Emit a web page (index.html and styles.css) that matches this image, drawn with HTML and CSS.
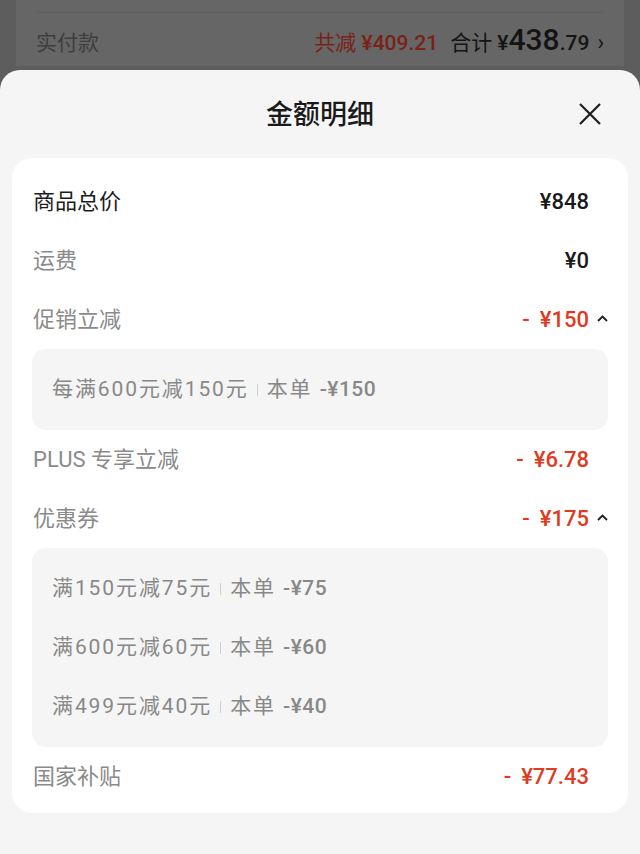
FILE: index.html
```html
<!DOCTYPE html>
<html lang="zh-CN">
  <head>
    <meta charset="UTF-8" />
    <meta name="viewport" content="width=device-width, initial-scale=1.0" />
    <title>金额明细</title>
    <link rel="stylesheet" href="styles.css">
  </head>
  <body>
    <div class="backdrop">
      <div class="under-card">
        <div class="pay-row">
          <span class="pay-label">实付款</span>
          <span class="pay-total">
            <span class="pay-saved">共减 <span class="num">¥409.21</span></span>
            <span class="pay-sum">合计 <span class="num">¥<b>438</b>.79</span></span>
            <span class="pay-arrow">›</span>
          </span>
        </div>
      </div>
    </div>

    <div class="sheet">
      <div class="sheet-head">
        <span></span>
        <h1 class="sheet-title">金额明细</h1>
        <button class="close" aria-label="关闭">
          <svg width="22" height="22" viewBox="0 0 22 22">
            <path d="M1 1 L21 21 M21 1 L1 21" stroke="#1f1f1f" stroke-width="2.2" fill="none" />
          </svg>
        </button>
      </div>

      <div class="card">
        <div class="row">
          <span class="label dark">商品总价</span>
          <span class="amount">¥848</span>
          <span class="caret-slot"></span>
        </div>
        <div class="row">
          <span class="label">运费</span>
          <span class="amount">¥0</span>
          <span class="caret-slot"></span>
        </div>
        <div class="row">
          <span class="label">促销立减</span>
          <span class="amount red"><i>-</i>¥150</span>
          <span class="caret-slot">
            <svg width="11" height="7" viewBox="0 0 11 7">
              <path d="M1 6 L5.5 1.5 L10 6" stroke="#1f1f1f" stroke-width="1.8" fill="none" />
            </svg>
          </span>
        </div>
        <div class="detail">
          <div class="detail-item">
            <span>每满600元减150元</span><span class="sep"></span><span>本单 <span class="num">-¥150</span></span>
          </div>
        </div>
        <div class="row">
          <span class="label">PLUS 专享立减</span>
          <span class="amount red"><i>-</i>¥6.78</span>
          <span class="caret-slot"></span>
        </div>
        <div class="row">
          <span class="label">优惠券</span>
          <span class="amount red"><i>-</i>¥175</span>
          <span class="caret-slot">
            <svg width="11" height="7" viewBox="0 0 11 7">
              <path d="M1 6 L5.5 1.5 L10 6" stroke="#1f1f1f" stroke-width="1.8" fill="none" />
            </svg>
          </span>
        </div>
        <div class="detail">
          <div class="detail-item">
            <span>满150元减75元</span><span class="sep"></span><span>本单 <span class="num">-¥75</span></span>
          </div>
          <div class="detail-item">
            <span>满600元减60元</span><span class="sep"></span><span>本单 <span class="num">-¥60</span></span>
          </div>
          <div class="detail-item">
            <span>满499元减40元</span><span class="sep"></span><span>本单 <span class="num">-¥40</span></span>
          </div>
        </div>
        <div class="row">
          <span class="label">国家补贴</span>
          <span class="amount red"><i>-</i>¥77.43</span>
          <span class="caret-slot"></span>
        </div>
      </div>
    </div>
  </body>
</html>
```

FILE: styles.css
```css
* {
  padding: 0;
  margin: 0;
  box-sizing: border-box;
}

body {
  width: 640px;
  height: 854px;
  overflow: hidden;
  background-color: #5d5d5d;
  font-family: Roboto, "Noto Sans CJK SC", sans-serif;
  line-height: 1.25;
  display: flex;
  flex-direction: column;
}

/* dimmed page behind the sheet */
.backdrop {
  height: 70px;
  padding: 0 16px;
}

.under-card {
  height: 66px;
  background-color: #666666;
  padding: 12px 20px 0;
}

.pay-row {
  height: 54px;
  border-top: 1px solid #5f5f5f;
  display: flex;
  align-items: baseline;
  justify-content: space-between;
  padding-top: 8px;
  font-size: 21px;
}

.pay-label {
  color: #3e3e3e;
}

.pay-total {
  display: flex;
  align-items: baseline;
  gap: 12px;
}

.pay-saved {
  color: #7a2118;
}

.pay-sum {
  color: #141414;
}

.num {
  font-weight: 500;
}

.pay-sum b {
  font-size: 30px;
  font-weight: 500;
}

.pay-arrow {
  color: #141414;
  font-size: 22px;
  margin-left: -4px;
}

/* sheet */
.sheet {
  flex: 1;
  background-color: #f5f5f5;
  border-radius: 20px 20px 0 0;
}

.sheet-head {
  height: 88px;
  display: grid;
  grid-template-columns: 1fr auto 1fr;
  align-items: center;
}

.sheet-title {
  font-size: 27px;
  font-weight: 500;
  color: #1a1a1a;
  margin-top: 4px;
}

.close {
  justify-self: end;
  margin-right: 38px;
  width: 24px;
  height: 24px;
  border: none;
  background: none;
  display: flex;
  align-items: center;
  justify-content: center;
}

.card {
  margin: 0 12px;
  background-color: #ffffff;
  border-radius: 20px;
  padding: 14px 20px 7px;
}

.row {
  height: 59px;
  display: flex;
  align-items: center;
  padding-left: 1px;
}

.label {
  flex: 1;
  font-size: 22px;
  color: #8a8a8a;
}

.label.dark {
  color: #1c1c1c;
}

.amount {
  font-size: 22px;
  font-weight: 500;
  color: #1a1a1a;
}

.amount i {
  font-style: normal;
  margin-right: 10px;
}

.amount.red {
  color: #e03a22;
}

.caret-slot {
  width: 19px;
  display: flex;
  justify-content: flex-end;
  padding-bottom: 3px;
}

.detail {
  background-color: #f5f5f5;
  border-radius: 14px;
  padding: 11px 20px;
}

.detail-item {
  height: 59px;
  display: flex;
  align-items: center;
  font-size: 21px;
  letter-spacing: 1.9px;
  color: #888888;
}

.detail-item .num {
  font-weight: 500;
  letter-spacing: 0.5px;
}

.sep {
  width: 1px;
  height: 12px;
  background-color: #cfcfcf;
  margin: 0 9px 0 8px;
}
```
